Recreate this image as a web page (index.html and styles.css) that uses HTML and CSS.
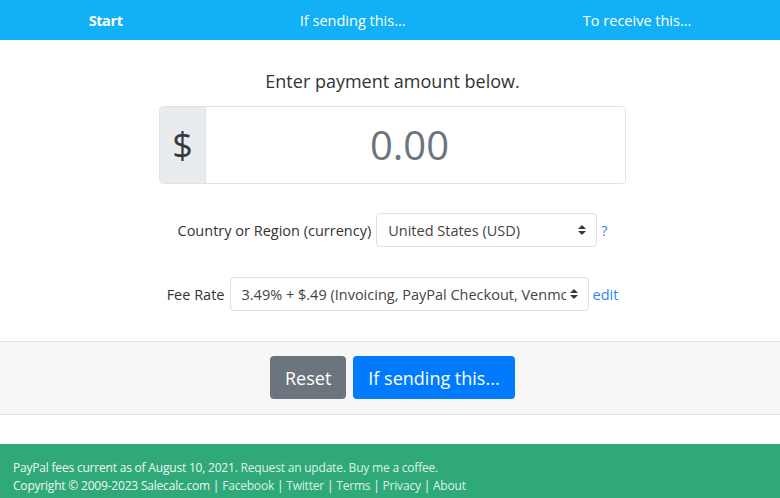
FILE: index.html
```html
<!DOCTYPE html>
<html>
<head>
  <title>PayPal Fee Calculator</title>
  <link rel="stylesheet" href="styles.css">
</head>
<body>
  <nav class="steps">
    <span class="step active">Start</span>
    <span class="step">If sending this...</span>
    <span class="step">To receive this...</span>
  </nav>

  <div class="main">
    <div class="prompt">Enter payment amount below.</div>

    <div class="amount-group">
      <div class="amount-prefix">$</div>
      <input class="amount-input" type="text" placeholder="0.00">
    </div>

    <div class="field-row country-row">
      <label class="field-label">Country or Region (currency)</label>
      <div class="select-wrap country-select">
        <select class="field-select">
          <option>United States (USD)</option>
        </select>
        <svg class="select-arrow" width="8" height="10" viewBox="0 0 8 10"><path d="M4 0L8 4H0z M4 10L0 6H8z" fill="#343a40"/></svg>
      </div>
      <a class="field-link" href="#">?</a>
    </div>

    <div class="field-row fee-row">
      <label class="field-label">Fee Rate</label>
      <div class="select-wrap fee-select">
        <select class="field-select">
          <option>3.49% + $.49 (Invoicing, PayPal Checkout, Venmo)</option>
        </select>
        <svg class="select-arrow" width="8" height="10" viewBox="0 0 8 10"><path d="M4 0L8 4H0z M4 10L0 6H8z" fill="#343a40"/></svg>
      </div>
      <a class="field-link" href="#">edit</a>
    </div>
  </div>

  <div class="actions">
    <button class="btn btn-reset">Reset</button>
    <button class="btn btn-next">If sending this...</button>
  </div>

  <footer class="footer">
    <div>PayPal fees current as of August 10, 2021. <a href="#">Request an update.</a> <a href="#">Buy me a coffee.</a></div>
    <div>Copyright © 2009-2023 Salecalc.com | <a href="#">Facebook</a> | <a href="#">Twitter</a> | <a href="#">Terms</a> | <a href="#">Privacy</a> | <a href="#">About</a></div>
  </footer>
</body>
</html>
```

FILE: styles.css
```css
body {
  margin: 0;
  padding: 0;
  font-family: "Open Sans", "Liberation Sans", sans-serif;
  color: #212529;
  background-color: #fff;
}

.steps {
  height: 40px;
  background-color: #12b1f5;
  display: flex;
  justify-content: space-around;
  align-items: center;
  color: #fff;
  font-size: 14.5px;
}

.step.active {
  font-weight: 700;
  letter-spacing: -0.4px;
}

.main {
  display: flex;
  flex-direction: column;
  align-items: center;
  padding: 29px 0 30px 5px;
}

.prompt {
  font-size: 18px;
  line-height: 24px;
  color: #333;
  margin-bottom: 13px;
}

.amount-group {
  display: flex;
  width: 467px;
  height: 78px;
  box-sizing: border-box;
  border: 1px solid #dfe3e6;
  border-radius: 4px;
  overflow: hidden;
}

.amount-prefix {
  flex-shrink: 0;
  width: 45px;
  background-color: #e9ecef;
  border-right: 1px solid #dfe3e6;
  display: flex;
  align-items: center;
  justify-content: center;
  font-size: 36px;
  color: #343a40;
  padding-bottom: 2px;
}

.amount-input {
  flex: 1;
  min-width: 0;
  border: none;
  outline: none;
  text-align: center;
  font-family: inherit;
  font-size: 40px;
  color: #6c757d;
  padding: 0 12px 2px 0;
}

.amount-input::placeholder {
  color: #6c757d;
}

.field-row {
  display: flex;
  align-items: center;
  height: 34px;
  font-size: 14.5px;
}

.country-row {
  margin-top: 29px;
}

.fee-row {
  margin-top: 30px;
}

.field-label {
  color: #333;
  margin-right: 5px;
}

.select-wrap {
  position: relative;
  height: 34px;
}

.country-select {
  width: 221px;
}

.fee-select {
  width: 359px;
}

.field-select {
  appearance: none;
  -webkit-appearance: none;
  width: 100%;
  height: 100%;
  box-sizing: border-box;
  border: 1px solid #dcdfe3;
  border-radius: 4px;
  background-color: #fff;
  font-family: inherit;
  font-size: 14.5px;
  color: #444;
  padding: 0 22px 0 11px;
  white-space: nowrap;
  overflow: hidden;
}

.select-arrow {
  position: absolute;
  right: 11px;
  top: 12px;
  pointer-events: none;
}

.field-link {
  color: #2f87f5;
  text-decoration: none;
  margin-left: 4px;
}

.actions {
  background-color: #f7f7f7;
  border-top: 1px solid #e2e2e2;
  border-bottom: 1px solid #e2e2e2;
  display: flex;
  justify-content: center;
  gap: 7px;
  padding: 14px 0 15px 5px;
  margin-bottom: 29px;
}

.btn {
  height: 43px;
  border: none;
  border-radius: 4px;
  color: #fff;
  font-family: inherit;
  font-size: 18px;
  padding: 0 15px;
  cursor: pointer;
}

.btn-reset {
  background-color: #6c757d;
  width: 76px;
}

.btn-next {
  background-color: #007bff;
  width: 162px;
}

.footer {
  background-color: #2ea977;
  color: #f0f8f4;
  font-size: 12px;
  line-height: 18px;
  letter-spacing: -0.2px;
  padding: 15px 13px 16px;
}

.footer a {
  color: #def2e8;
  text-decoration: none;
}
```
